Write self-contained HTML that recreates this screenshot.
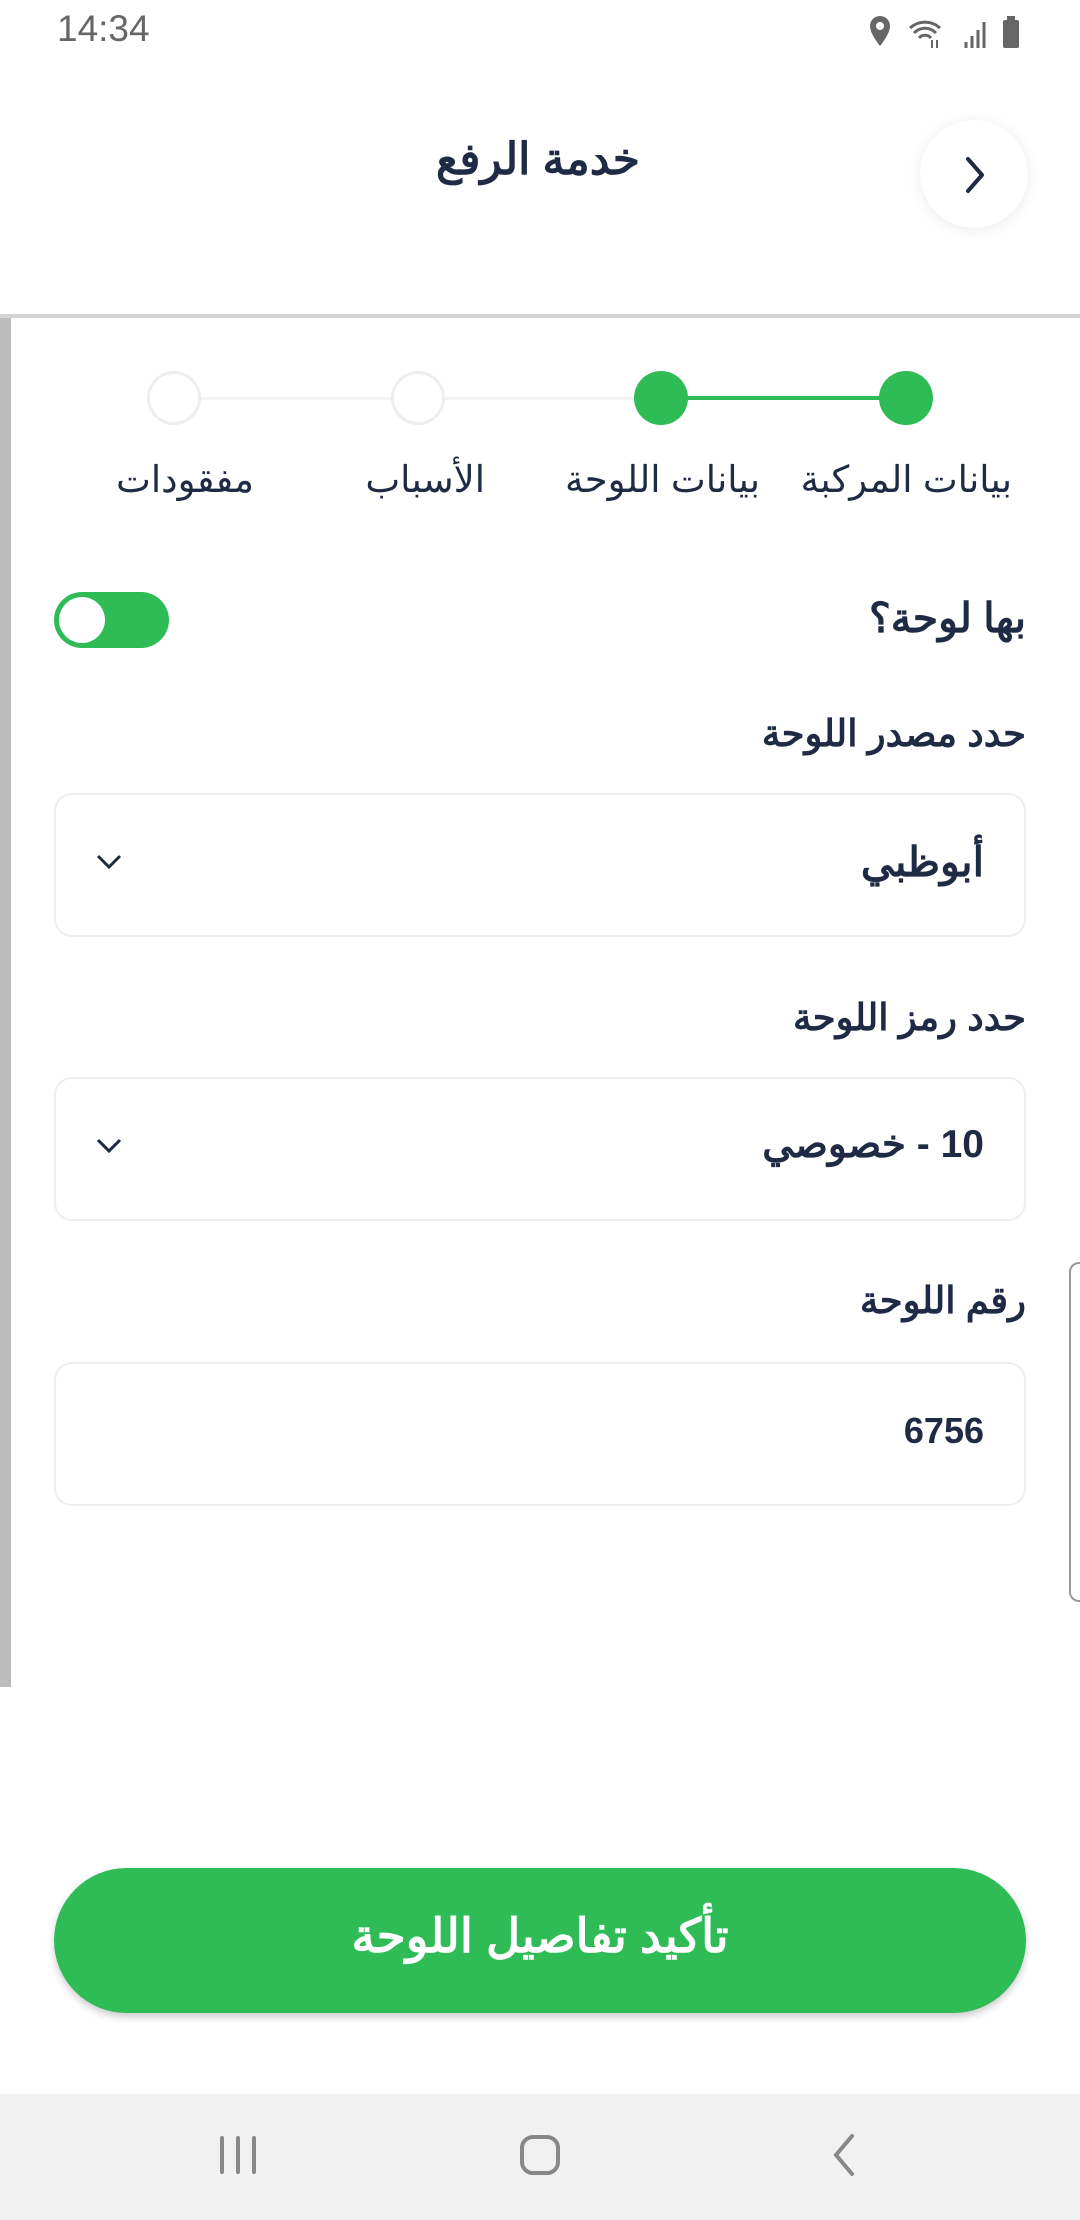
<!DOCTYPE html>
<html lang="ar"><head><meta charset="utf-8">
<style>
*{box-sizing:border-box;margin:0;padding:0}
body{width:1080px;height:2220px;background:#fff;position:relative;overflow:hidden;font-family:"Liberation Sans","Noto Sans CJK SC",sans-serif;color:#1f2a44}
.abs{position:absolute}
.t{position:absolute;white-space:nowrap;direction:rtl}
.box{position:absolute;left:54px;width:972px;height:144px;border:2px solid #eeeef2;border-radius:18px}
.lbl{font-weight:bold;font-size:37px;right:54px}
.circ{position:absolute;width:54px;height:54px;border-radius:50%;top:371px}
.step{font-size:37px;top:458px;color:#1f2a44}
</style></head><body>
<div class="t" style="left:57px;top:8px;font-size:37px;color:#666;direction:ltr">14:34</div>
<svg class="abs" style="left:862px;top:14px" width="165" height="36" viewBox="0 0 165 36">
<path d="M18 2a10 10 0 0 0-10 10c0 8 10 20 10 20s10-12 10-20A10 10 0 0 0 18 2z" fill="#666"/><circle cx="18" cy="12" r="4" fill="#fff"/>
<path d="M48 14a22 22 0 0 1 30 0M52 19a15 15 0 0 1 22 0M57 24a8 8 0 0 1 12 0" stroke="#666" stroke-width="3" fill="none"/>
<path d="M70 26v8M75 26v8" stroke="#666" stroke-width="2"/>
<path d="M104 34v-6M110 34v-12M116 34v-18M122 34v-26" stroke="#666" stroke-width="3"/>
<rect x="141" y="6" width="16" height="28" rx="2" fill="#666"/><rect x="145" y="2" width="8" height="5" fill="#666"/>
</svg>
<div class="t" style="left:0;width:1076px;text-align:center;top:134px;font-size:44px;font-weight:bold;color:#1f2a44">خدمة الرفع</div>
<div class="abs" style="left:920px;top:120px;width:108px;height:108px;border-radius:50%;background:#fff;box-shadow:0 2px 14px rgba(0,0,0,0.08)"></div>
<svg class="abs" style="left:960px;top:154px" width="30" height="42" viewBox="0 0 30 42"><path d="M8 5l14 16-14 16" stroke="#1f2a44" stroke-width="4" fill="none" stroke-linecap="round" stroke-linejoin="round"/></svg>
<div class="abs" style="left:0;top:314px;width:1080px;height:4px;background:#d3d3d3"></div>
<div class="abs" style="left:0;top:318px;width:11px;height:1369px;background:#bcbcbc"></div>
<div class="abs" style="left:174px;top:397px;width:487px;height:3px;background:#f3f3f6"></div>
<div class="abs" style="left:661px;top:396px;width:245px;height:4px;background:#2fbc57"></div>
<div class="circ" style="left:879px;background:#2fbc57"></div>
<div class="circ" style="left:634px;background:#2fbc57"></div>
<div class="circ" style="left:391px;background:#fff;border:3px solid #eeeef2"></div>
<div class="circ" style="left:147px;background:#fff;border:3px solid #eeeef2"></div>
<div class="t step" style="right:68px">بيانات المركبة</div>
<div class="t step" style="right:320px">بيانات اللوحة</div>
<div class="t step" style="right:595px">الأسباب</div>
<div class="t step" style="right:826px">مفقودات</div>
<div class="t lbl" style="top:594px;font-size:41px">بها لوحة؟</div>
<div class="abs" style="left:54px;top:592px;width:115px;height:56px;border-radius:28px;background:#2fbc57"></div>
<div class="abs" style="left:59px;top:597px;width:46px;height:46px;border-radius:50%;background:#fff"></div>
<div class="t lbl" style="top:712px">حدد مصدر اللوحة</div>
<div class="box" style="top:793px"></div>
<div class="t" style="right:96px;top:838px;font-size:41px;font-weight:bold">أبوظبي</div>
<svg class="abs" style="left:94px;top:852px" width="30" height="20" viewBox="0 0 30 20"><path d="M4 4l11 11 11-11" stroke="#1f2a44" stroke-width="3" fill="none"/></svg>
<div class="t lbl" style="top:996px">حدد رمز اللوحة</div>
<div class="box" style="top:1077px"></div>
<div class="t" style="right:96px;top:1122px;font-size:39px;font-weight:bold">10 - خصوصي</div>
<svg class="abs" style="left:94px;top:1136px" width="30" height="20" viewBox="0 0 30 20"><path d="M4 4l11 11 11-11" stroke="#1f2a44" stroke-width="3" fill="none"/></svg>
<div class="t lbl" style="top:1279px">رقم اللوحة</div>
<div class="box" style="top:1362px"></div>
<div class="t" style="right:96px;top:1410px;font-size:36px;font-weight:bold;direction:ltr">6756</div>
<div class="abs" style="left:1069px;top:1262px;width:20px;height:340px;border:2px solid #999;border-radius:10px"></div>
<div class="abs" style="left:54px;top:1868px;width:972px;height:145px;border-radius:73px;background:#2fbc57;box-shadow:0 4px 8px rgba(0,0,0,0.2)"></div>
<div class="t" style="left:54px;width:972px;text-align:center;top:1908px;font-size:47px;font-weight:bold;color:#fff">تأكيد تفاصيل اللوحة</div>
<div class="abs" style="left:0;top:2094px;width:1080px;height:126px;background:#f1f1f1"></div>
<svg class="abs" style="left:0;top:2120px" width="1080" height="70" viewBox="0 0 1080 70">
<path d="M222 18v34M238 18v34M254 18v34" stroke="#888" stroke-width="4" stroke-linecap="round"/>
<rect x="522" y="17" width="36" height="36" rx="11" stroke="#888" stroke-width="4" fill="none"/>
<path d="M852 16l-16 19 16 19" stroke="#888" stroke-width="4" fill="none" stroke-linecap="round"/>
</svg>
</body></html>
